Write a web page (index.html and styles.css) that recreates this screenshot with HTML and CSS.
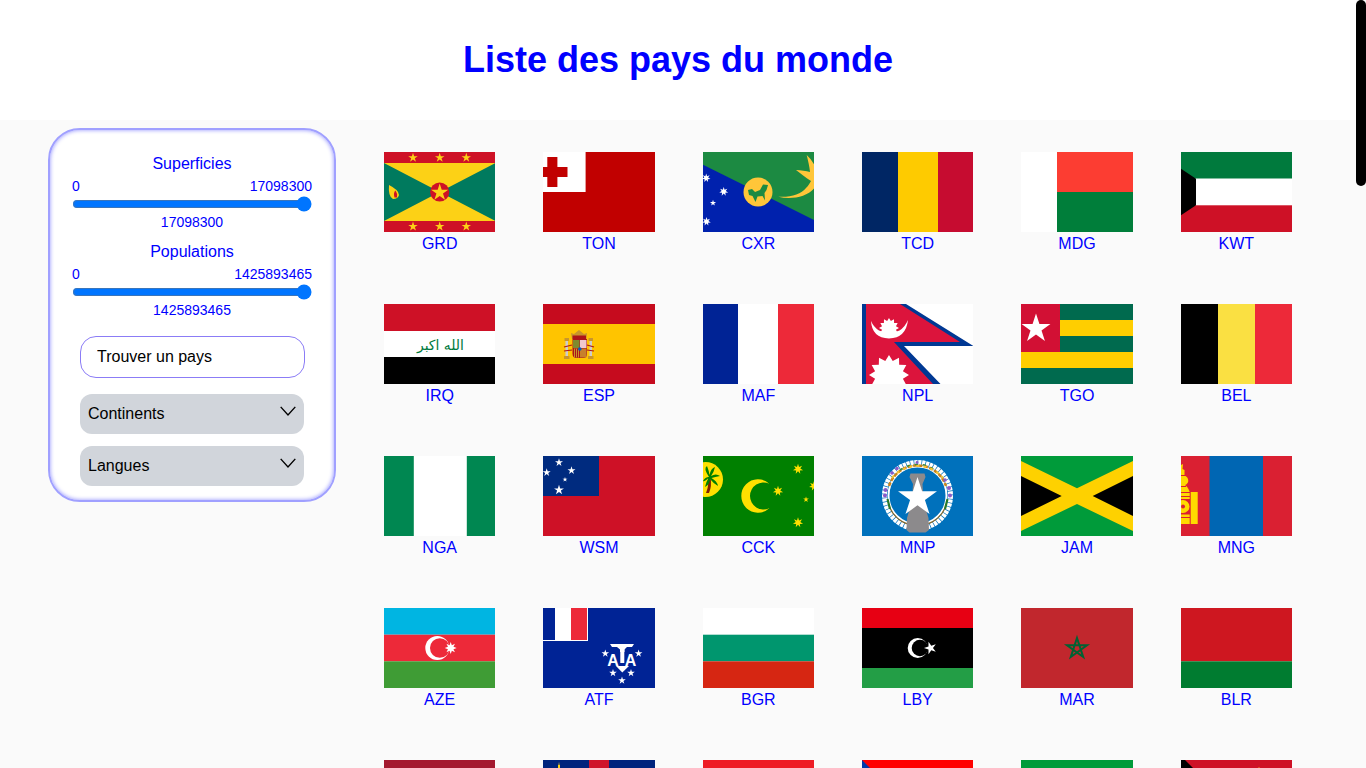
FILE: index.html
```html
<!DOCTYPE html>
<html lang="fr">
<head>
<meta charset="utf-8">
<title>Liste des pays du monde</title>
<link rel="stylesheet" href="styles.css">
</head>
<body>
<svg class="defs" aria-hidden="true">
  <defs>
    <polygon id="s5" points="0,-1 .2245,-.309 .951,-.309 .363,.118 .588,.809 0,.382 -.588,.809 -.363,.118 -.951,-.309 -.2245,-.309"/>
    <polygon id="s7" points="0,-1 .195,-.405 .782,-.623 .439,-.1 .975,.223 .352,.281 .434,.901 0,.45 -.434,.901 -.352,.281 -.975,.223 -.439,-.1 -.782,-.623 -.195,-.405"/>
    <polygon id="s8" points="0,-1 .191,-.462 .707,-.707 .462,-.191 1,0 .462,.191 .707,.707 .191,.462 0,1 -.191,.462 -.707,.707 -.462,.191 -1,0 -.462,-.191 -.707,-.707 -.191,-.462"/>
    <polygon id="s12" points="0,-1 .186,-.695 .5,-.866 .509,-.509 .866,-.5 .695,-.186 1,0 .695,.186 .866,.5 .509,.509 .5,.866 .186,.695 0,1 -.186,.695 -.5,.866 -.509,.509 -.866,.5 -.695,.186 -1,0 -.695,-.186 -.866,-.5 -.509,-.509 -.5,-.866 -.186,-.695"/>
  </defs>
</svg>
<div class="thumb" aria-hidden="true"></div>
<div class="page">
  <header class="top"><h1 class="title">Liste des pays du monde</h1></header>
  <main class="content">
    <aside class="filters">
      <section class="range">
        <h2 class="range-title">Superficies</h2>
        <div class="range-ends"><span>0</span><span>17098300</span></div>
        <input class="slider" type="range" min="0" max="17098300" value="17098300" aria-label="Superficies">
        <div class="range-value">17098300</div>
      </section>
      <section class="range">
        <h2 class="range-title">Populations</h2>
        <div class="range-ends"><span>0</span><span>1425893465</span></div>
        <input class="slider" type="range" min="0" max="1425893465" value="1425893465" aria-label="Populations">
        <div class="range-value">1425893465</div>
      </section>
      <input class="search" type="text" placeholder="Trouver un pays">
      <button class="drop drop-first" type="button"><span>Continents</span><svg class="chev" viewBox="0 0 16 10"><path d="M.7.9 8 8.9 15.3.9"/></svg></button>
      <button class="drop" type="button"><span>Langues</span><svg class="chev" viewBox="0 0 16 10"><path d="M.7.9 8 8.9 15.3.9"/></svg></button>
    </aside>
    <div class="grid">
      <figure class="card"><svg class="flag" viewBox="0 0 111.33 80">
        <rect width="112" height="80" fill="#ce1126"/>
        <rect y="11" width="112" height="58" fill="#fcd116"/>
        <path d="M0 11 55.7 40 0 69ZM111.33 11 55.7 40 111.33 69Z" fill="#007a5e"/>
        <circle cx="55.7" cy="40" r="9.6" fill="#ce1126"/>
        <g fill="#fcd116"><use href="#s5" transform="translate(55.7 40.5) scale(9)"/>
        <use href="#s5" transform="translate(29 5.7) scale(5)"/><use href="#s5" transform="translate(55.7 5.7) scale(5)"/><use href="#s5" transform="translate(82.3 5.7) scale(5)"/>
        <use href="#s5" transform="translate(29 74.5) scale(5)"/><use href="#s5" transform="translate(55.7 74.5) scale(5)"/><use href="#s5" transform="translate(82.3 74.5) scale(5)"/>
        <path d="M5 33Q15 38 15 43 14 47 9 47 4 45 5 33Z"/></g>
        <path d="M10.5 45.5Q9 41 11.5 38.5 14 42 13 45.5Z" fill="#ce1126"/>
      </svg><figcaption>GRD</figcaption></figure>

      <figure class="card"><svg class="flag" viewBox="0 0 111.33 80">
        <rect width="112" height="80" fill="#c10000"/>
        <rect width="42.6" height="40" fill="#fff"/>
        <path d="M4.3 5H14.4V15H24.5V25H14.4V35H4.3V25H0V15H4.3Z" fill="#c10000"/>
      </svg><figcaption>TON</figcaption></figure>

      <figure class="card"><svg class="flag" viewBox="0 0 111.33 80">
        <rect width="112" height="80" fill="#0021ad"/>
        <path d="M0 0H112V68.5L0 12.7Z" fill="#1c8a42"/>
        <circle cx="55" cy="40" r="14.5" fill="#ffc639"/>
        <path d="M45 38 49 37 52 40 57 38 60 32.5 65 33 63.5 38 61.5 41 62 48.5 59.5 44 54.5 44.5 52.5 50 49.5 44 46 43Z" fill="#1c8a42"/>
        <path d="M75.3 44.7C88 45.500 98 42 103 36 105.500 33.500 107 31 108 29 102 25 98 22 93 18 98 18 103 19 107 20 106.500 14 105 9 103.700 3 107 6 109 9 111.400 13V36C104 45 88 48 75.300 44.700Z" fill="#ffc639"/>
        <g fill="#fff"><use href="#s7" transform="translate(3.200 26) scale(4.400)"/><use href="#s7" transform="translate(20.700 39.500) scale(4.600)"/><use href="#s5" transform="translate(10 51) scale(3.200)"/><use href="#s7" transform="translate(3.500 69.500) scale(4.400)"/></g>
      </svg><figcaption>CXR</figcaption></figure>

      <figure class="card"><svg class="flag" viewBox="0 0 111.33 80">
        <rect width="36" height="80" fill="#002664"/><rect x="36" width="40" height="80" fill="#fecb00"/><rect x="76" width="36" height="80" fill="#c60c30"/>
      </svg><figcaption>TCD</figcaption></figure>

      <figure class="card"><svg class="flag" viewBox="0 0 111.33 80">
        <rect width="36" height="80" fill="#fff"/><rect x="36" width="76" height="40" fill="#fc3d32"/><rect x="36" y="40" width="76" height="40" fill="#007e3a"/>
      </svg><figcaption>MDG</figcaption></figure>

      <figure class="card"><svg class="flag" viewBox="0 0 111.33 80">
        <rect width="112" height="26.700" fill="#007a3d"/><rect y="26.700" width="112" height="26.600" fill="#fff"/><rect y="53.300" width="112" height="26.700" fill="#ce1126"/>
        <path d="M0 16.700 15 26.700V53.300L0 63.300Z"/>
      </svg><figcaption>KWT</figcaption></figure>

      <figure class="card"><svg class="flag" viewBox="0 0 111.33 80">
        <rect width="112" height="27" fill="#ce1126"/><rect y="27" width="112" height="26" fill="#fff"/><rect y="53" width="112" height="27"/>
        <text class="takbir" x="56.500" y="46" text-anchor="middle" textLength="47" lengthAdjust="spacingAndGlyphs">الله اكبر</text>
      </svg><figcaption>IRQ</figcaption></figure>

      <figure class="card"><svg class="flag" viewBox="0 0 111.33 80">
        <rect width="112" height="80" fill="#c60b1e"/><rect y="20" width="112" height="40" fill="#ffc400"/>
        <path d="M29 35 28 29 31 30 36 26 41 30 44 29 43.500 35Z" fill="#c8952c"/>
        <path d="M29.500 31.500H43V35H29.500Z" fill="#ad1519"/>
        <path d="M29.500 35H44V49.500Q44 54 40 54H33.500Q29.500 54 29.500 49.500Z" fill="#ad1519"/>
        <rect x="37" y="36" width="6.500" height="8" fill="#f0c8d0"/>
        <rect x="37" y="44.500" width="6.500" height="9" fill="#c8802c"/>
        <rect x="30" y="36" width="6.500" height="8" fill="#7f8a2e"/>
        <path d="M31 44.500H36V53.500H31Z" fill="#c8952c"/><path d="M32 44.500H33V53.500H32ZM34 44.500H35V53.500H34Z" fill="#ad1519"/>
        <circle cx="36.800" cy="45" r="1.800" fill="#005bbf"/>
        <g fill="#cccccc"><rect x="22.500" y="37" width="2.500" height="15"/><rect x="46.500" y="37" width="2.500" height="15"/></g>
        <g fill="#c8952c"><rect x="21.500" y="34" width="4.500" height="3"/><rect x="45.500" y="34" width="4.500" height="3"/><rect x="21" y="52" width="5.500" height="3"/><rect x="45" y="52" width="5.500" height="3"/></g>
        <path d="M21 43 29 41M21 47 29 46M44 41 51 43M44 46 51 47" stroke="#ad1519" stroke-width="1.200" fill="none"/>
      </svg><figcaption>ESP</figcaption></figure>

      <figure class="card"><svg class="flag" viewBox="0 0 111.33 80">
        <rect width="35" height="80" fill="#002395"/><rect x="35" width="40" height="80" fill="#fff"/><rect x="75" width="37" height="80" fill="#ed2939"/>
      </svg><figcaption>MAF</figcaption></figure>

      <figure class="card"><svg class="flag" viewBox="0 0 111.33 80">
        <rect width="112" height="80" fill="#fff"/>
        <path d="M0 0H44L111.400 42H42L78.500 80H0Z" fill="#003893"/>
        <path d="M4 0H38L98 38H32L71 80H4Z" fill="#dc143c"/>
        <path d="M9 17Q10 34 27 34.500 44 34 46 16 43 23 37.500 26.500 27 31 17 26.500 11.500 23 9 17Z" fill="#fff"/>
        <use href="#s12" transform="translate(27 24) scale(10)" fill="#fff"/>
        <use href="#s12" transform="translate(27 71) scale(20)" fill="#fff"/>
      </svg><figcaption>NPL</figcaption></figure>

      <figure class="card"><svg class="flag" viewBox="0 0 111.33 80">
        <rect width="112" height="80" fill="#006a4e"/>
        <rect y="16" width="112" height="16" fill="#ffce00"/><rect y="48" width="112" height="16" fill="#ffce00"/>
        <rect width="39" height="48" fill="#d21034"/>
        <use href="#s5" transform="translate(15 24.800) scale(15.200)" fill="#fff"/>
      </svg><figcaption>TGO</figcaption></figure>

      <figure class="card"><svg class="flag" viewBox="0 0 111.33 80">
        <rect width="37" height="80"/><rect x="37" width="37" height="80" fill="#fae042"/><rect x="74" width="38" height="80" fill="#ed2939"/>
      </svg><figcaption>BEL</figcaption></figure>

      <figure class="card"><svg class="flag" viewBox="0 0 111.33 80">
        <rect width="112" height="80" fill="#008751"/><rect x="29.800" width="53" height="80" fill="#fff"/>
      </svg><figcaption>NGA</figcaption></figure>

      <figure class="card"><svg class="flag" viewBox="0 0 111.33 80">
        <rect width="112" height="80" fill="#ce1126"/><rect width="56" height="40" fill="#002b7f"/>
        <g fill="#fff"><use href="#s5" transform="translate(16 6.500) scale(4.200)"/><use href="#s5" transform="translate(28.500 14.500) scale(4.200)"/><use href="#s5" transform="translate(3.700 16.500) scale(4.200)"/><use href="#s5" transform="translate(22 23.500) scale(2.600)"/><use href="#s5" transform="translate(16 34) scale(5.200)"/></g>
      </svg><figcaption>WSM</figcaption></figure>

      <figure class="card"><svg class="flag" viewBox="0 0 111.33 80">
        <rect width="112" height="80" fill="#008000"/>
        <circle cx="2.500" cy="23.500" r="17.500" fill="#ffe000"/>
        <path d="M3 37Q6 30 5 21H7.500Q9 30 6 37Z" fill="#802000"/>
        <path d="M6 21Q0 12 4 10 6 15 6.500 19 8 12 12 11 11 16 8 20 13 17 17 20 12 21 8.500 22 14 25 15 30 10 27 7 23 7 28 2 31 3 26 5.500 22 1 26 0 25 2 21 6 21Z" fill="#008000"/>
        <path d="M66.300 27.700A16.700 16.700 0 1 0 66.300 52.300 13.570 13.570 0 1 1 66.300 27.700Z" fill="#ffe000"/>
        <g fill="#ffe000"><use href="#s7" transform="translate(95 13) scale(5.200)"/><use href="#s7" transform="translate(75 35) scale(5.200)"/><use href="#s7" transform="translate(111 30) scale(5)"/><use href="#s5" transform="translate(103 43.500) scale(3)"/><use href="#s7" transform="translate(95 66.500) scale(5.200)"/></g>
      </svg><figcaption>CCK</figcaption></figure>

      <figure class="card"><svg class="flag" viewBox="0 0 111.33 80">
        <rect width="112" height="80" fill="#0071bc"/>
        <circle cx="55.500" cy="39.500" r="33" fill="none" stroke="#fff" stroke-width="5" stroke-dasharray="3.200 .7"/>
        <circle cx="55.500" cy="39.500" r="29" fill="none" stroke="#fff" stroke-width="2"/>
        <path d="M27 30A30 30 0 0 1 84 30" fill="none" stroke="#c8841c" stroke-width="2.500" stroke-dasharray="4 1.500"/>
        <path d="M38 14A30 30 0 0 1 73 14" fill="none" stroke="#3c8a3c" stroke-width="1.500" stroke-dasharray="3 5"/>
        <path d="M30 22A33 33 0 0 1 81 22" fill="none" stroke="#f4c430" stroke-width="2" stroke-dasharray="3 4"/>
        <path d="M26.500 48A30.500 30.500 0 0 0 47 68.500M84.500 48A30.500 30.500 0 0 1 64 68.500" fill="none" stroke="#8a6a2a" stroke-width="1.300"/>
        <path d="M25.500 43 28 53M85.500 43 83 53" fill="none" stroke="#2a7a2a" stroke-width="2.200"/>
        <g fill="#8a5ac8"><circle cx="23.500" cy="34" r="2"/><circle cx="23" cy="39.500" r="2"/><circle cx="30" cy="17" r="1.800"/><circle cx="35" cy="12.500" r="1.700"/><circle cx="55" cy="6.500" r="1.400"/><circle cx="87" cy="32" r="2"/><circle cx="88" cy="39.500" r="2"/><circle cx="83" cy="24" r="1.800"/></g>
        <path d="M48.500 17.500H62.500L63.500 21 60.500 28 61.500 45 66.500 62 67 74 63.500 76.500H47.500L44.500 74 45 62 50 45 51 28 47.500 21Z" fill="#8c8a8c"/>
        <use href="#s5" transform="translate(55.500 41.500) scale(20.500)" fill="#fff"/>
      </svg><figcaption>MNP</figcaption></figure>

      <figure class="card"><svg class="flag" viewBox="0 0 111.33 80">
        <rect width="112" height="80" fill="#fed100"/>
        <path d="M0 0H112V5L56 32.300 0 5ZM0 80H112V75L56 48 0 75Z" fill="#009b3a"/>
        <path d="M0 20 40.700 40 0 60ZM112 20 71.700 40 112 60Z"/>
      </svg><figcaption>JAM</figcaption></figure>

      <figure class="card"><svg class="flag" viewBox="0 0 111.33 80">
        <rect width="112" height="80" fill="#da2032"/><rect x="28.500" width="53.500" height="80" fill="#0066b3"/>
        <g fill="#ffd900">
          <rect x="9.700" y="36" width="7" height="32"/>
          <path d="M0 19H3.500V14L1.500 13 2 8 0 9Z"/>
          <path d="M0 20H4.500A5 5 0 0 1 0 29Z"/>
          <path d="M0 27H1Q7 30 8.700 36H0Z"/>
          <rect y="37" width="8.700" height="3"/>
          <rect y="41" width="8.700" height="2"/>
          <circle cx="2" cy="50.500" r="6.500"/>
          <rect y="58.500" width="8.700" height="2.500"/>
          <rect y="62" width="8.700" height="6"/>
        </g>
        <circle cx="2" cy="50.500" r="2" fill="#da2032"/>
        <path d="M0 30.500H5" stroke="#da2032" fill="none"/>
      </svg><figcaption>MNG</figcaption></figure>

      <figure class="card"><svg class="flag" viewBox="0 0 111.33 80">
        <rect width="112" height="26.700" fill="#00b5e2"/><rect y="26.700" width="112" height="26.600" fill="#ed2939"/><rect y="53.300" width="112" height="26.700" fill="#3f9c35"/>
        <circle cx="53.300" cy="40" r="12" fill="#fff"/><circle cx="55.800" cy="40" r="9.800" fill="#ed2939"/>
        <use href="#s8" transform="translate(66.700 40) scale(6)" fill="#fff"/>
      </svg><figcaption>AZE</figcaption></figure>

      <figure class="card"><svg class="flag" viewBox="0 0 111.33 80">
        <rect width="112" height="80" fill="#002395"/>
        <rect width="45" height="33" fill="#fff"/>
        <rect width="12" height="32" fill="#002395"/><rect x="28" width="16" height="32" fill="#ed2939"/>
        <g fill="#fff">
          <path d="M67 36H91L89 39H84L81.500 41.500V44H77V41.500L74 39H69Z"/>
          <rect x="77.300" y="41" width="4" height="14"/>
          <path d="M73 58H86L79.300 64.500Z"/>
          <use href="#s5" transform="translate(62.300 45.500) scale(4)"/><use href="#s5" transform="translate(95.600 45.500) scale(4)"/><use href="#s5" transform="translate(70 65) scale(4)"/><use href="#s5" transform="translate(88 65) scale(4)"/><use href="#s5" transform="translate(79 72.500) scale(4)"/>
        </g>
        <text class="taaf" x="70" y="58" text-anchor="middle">A</text>
        <text class="taaf" x="87.500" y="58" text-anchor="middle">A</text>
      </svg><figcaption>ATF</figcaption></figure>

      <figure class="card"><svg class="flag" viewBox="0 0 111.33 80">
        <rect width="112" height="26.700" fill="#fff"/><rect y="26.700" width="112" height="26.600" fill="#00966e"/><rect y="53.300" width="112" height="26.700" fill="#d62612"/>
      </svg><figcaption>BGR</figcaption></figure>

      <figure class="card"><svg class="flag" viewBox="0 0 111.33 80">
        <rect width="112" height="20" fill="#e70013"/><rect y="20" width="112" height="40"/><rect y="60" width="112" height="20" fill="#239e46"/>
        <circle cx="55.700" cy="40" r="10" fill="#fff"/><circle cx="58" cy="40" r="8.300"/>
        <use href="#s5" transform="translate(68.500 40) scale(6.500) rotate(-90)" fill="#fff"/>
      </svg><figcaption>LBY</figcaption></figure>

      <figure class="card"><svg class="flag" viewBox="0 0 111.33 80">
        <rect width="112" height="80" fill="#c1272d"/>
        <polygon points="56,30 62.200,49 46,37.300 66,37.300 49.800,49" fill="none" stroke="#006233" stroke-width="2"/>
      </svg><figcaption>MAR</figcaption></figure>

      <figure class="card"><svg class="flag" viewBox="0 0 111.33 80">
        <rect width="112" height="53.300" fill="#ce1720"/><rect y="53.300" width="112" height="26.700" fill="#007c30"/>
      </svg><figcaption>BLR</figcaption></figure>

      <figure class="card"><svg class="flag" viewBox="0 0 111.33 80"><rect width="112" height="80" fill="#a4192f"/></svg></figure>
      <figure class="card"><svg class="flag" viewBox="0 0 111.33 80">
        <rect width="112" height="80" fill="#00247d"/><rect x="46" width="20" height="80" fill="#cf142b"/>
        <path d="M15 8 16 2 17 8Z" fill="#fcd116"/><rect x="15" y="5" width="2" height="10" fill="#fcd116"/>
      </svg></figure>
      <figure class="card"><svg class="flag" viewBox="0 0 111.33 80"><rect width="112" height="80" fill="#ee1c25"/></svg></figure>
      <figure class="card"><svg class="flag" viewBox="0 0 111.33 80">
        <rect width="112" height="80" fill="#f00"/><path d="M0 0 40 40 0 80Z" fill="#0038a8"/>
      </svg></figure>
      <figure class="card"><svg class="flag" viewBox="0 0 111.33 80"><rect width="112" height="80" fill="#009b3a"/></svg></figure>
      <figure class="card"><svg class="flag" viewBox="0 0 111.33 80">
        <rect width="112" height="80" fill="#ce1126"/><path d="M0 0H4L12 8H0Z"/><circle cx="78" cy="9" r="1.500" fill="#fcd116"/>
      </svg></figure>
    </div>
  </main>
</div>
</body>
</html>
```
FILE: styles.css
```css
* { box-sizing: border-box; }
html, body { margin: 0; height: 100%; overflow: hidden; }
body {
  background: #fafafa;
  color: #000;
  font: 16px/24px "Liberation Sans", Arial, sans-serif;
}
.defs { position: absolute; width: 0; height: 0; }
.thumb {
  position: fixed;
  top: 0;
  right: 0;
  width: 10px;
  height: 186px;
  background: #000;
  border-radius: 5px;
}
.page { width: 1356px; }
.top {
  height: 120px;
  background: #fff;
  display: flex;
  align-items: center;
  justify-content: center;
}
.title {
  margin: 0;
  color: #00f;
  font-size: 36px;
  line-height: 40px;
  font-weight: 700;
}
.content { display: flex; align-items: flex-start; }
.filters {
  flex: none;
  width: 288px;
  height: 374px;
  margin: 8px 0 0 48px;
  padding: 22px 22px 14px;
  background: #fff;
  border: 2px solid #a0a0ff;
  border-radius: 32px;
  box-shadow: inset 0 0 4px #8f8fff;
  color: #00f;
  display: flex;
  flex-direction: column;
}
.range { margin-bottom: 8px; text-align: center; }
.range-title { margin: 0; font-size: 16px; line-height: 24px; font-weight: 400; }
.range-ends { display: flex; justify-content: space-between; font-size: 14px; line-height: 20px; }
.slider { display: block; width: 100%; height: 16px; margin: 0; }
.range-value { font-size: 14px; line-height: 20px; }
.search {
  flex: none;
  width: 225px;
  height: 42px;
  margin: 8px 0 16px 8px;
  padding: 0 16px;
  border: 1px solid #8b7cf6;
  border-radius: 16px;
  background: #fff;
  color: #000;
  font: inherit;
  outline: none;
}
.search::placeholder { color: #000; opacity: 1; }
.drop {
  flex: none;
  width: 224px;
  height: 40px;
  margin: 0 0 0 8px;
  padding: 0 8px;
  border: 0;
  border-radius: 12px;
  background: #d1d5db;
  color: #000;
  font: inherit;
  display: flex;
  align-items: center;
  justify-content: space-between;
  text-align: left;
}
.drop-first { margin-bottom: 12px; }
.chev {
  width: 16px;
  height: 10px;
  margin-bottom: 6px;
  fill: none;
  stroke: #000;
  stroke-width: 1.4;
}
.grid {
  flex: 1;
  display: grid;
  grid-template-columns: repeat(6, 1fr);
  gap: 48px;
  padding: 32px 64px 0 48px;
}
.card { margin: 0; text-align: center; color: #00f; }
.card figcaption { height: 24px; }
.flag { display: block; width: 100%; height: 80px; }
.takbir {
  fill: #007a3d;
  font: 400 14px "DejaVu Sans", sans-serif;
}
.taaf {
  fill: #fff;
  font: 700 16px "Liberation Sans", sans-serif;
}
```
